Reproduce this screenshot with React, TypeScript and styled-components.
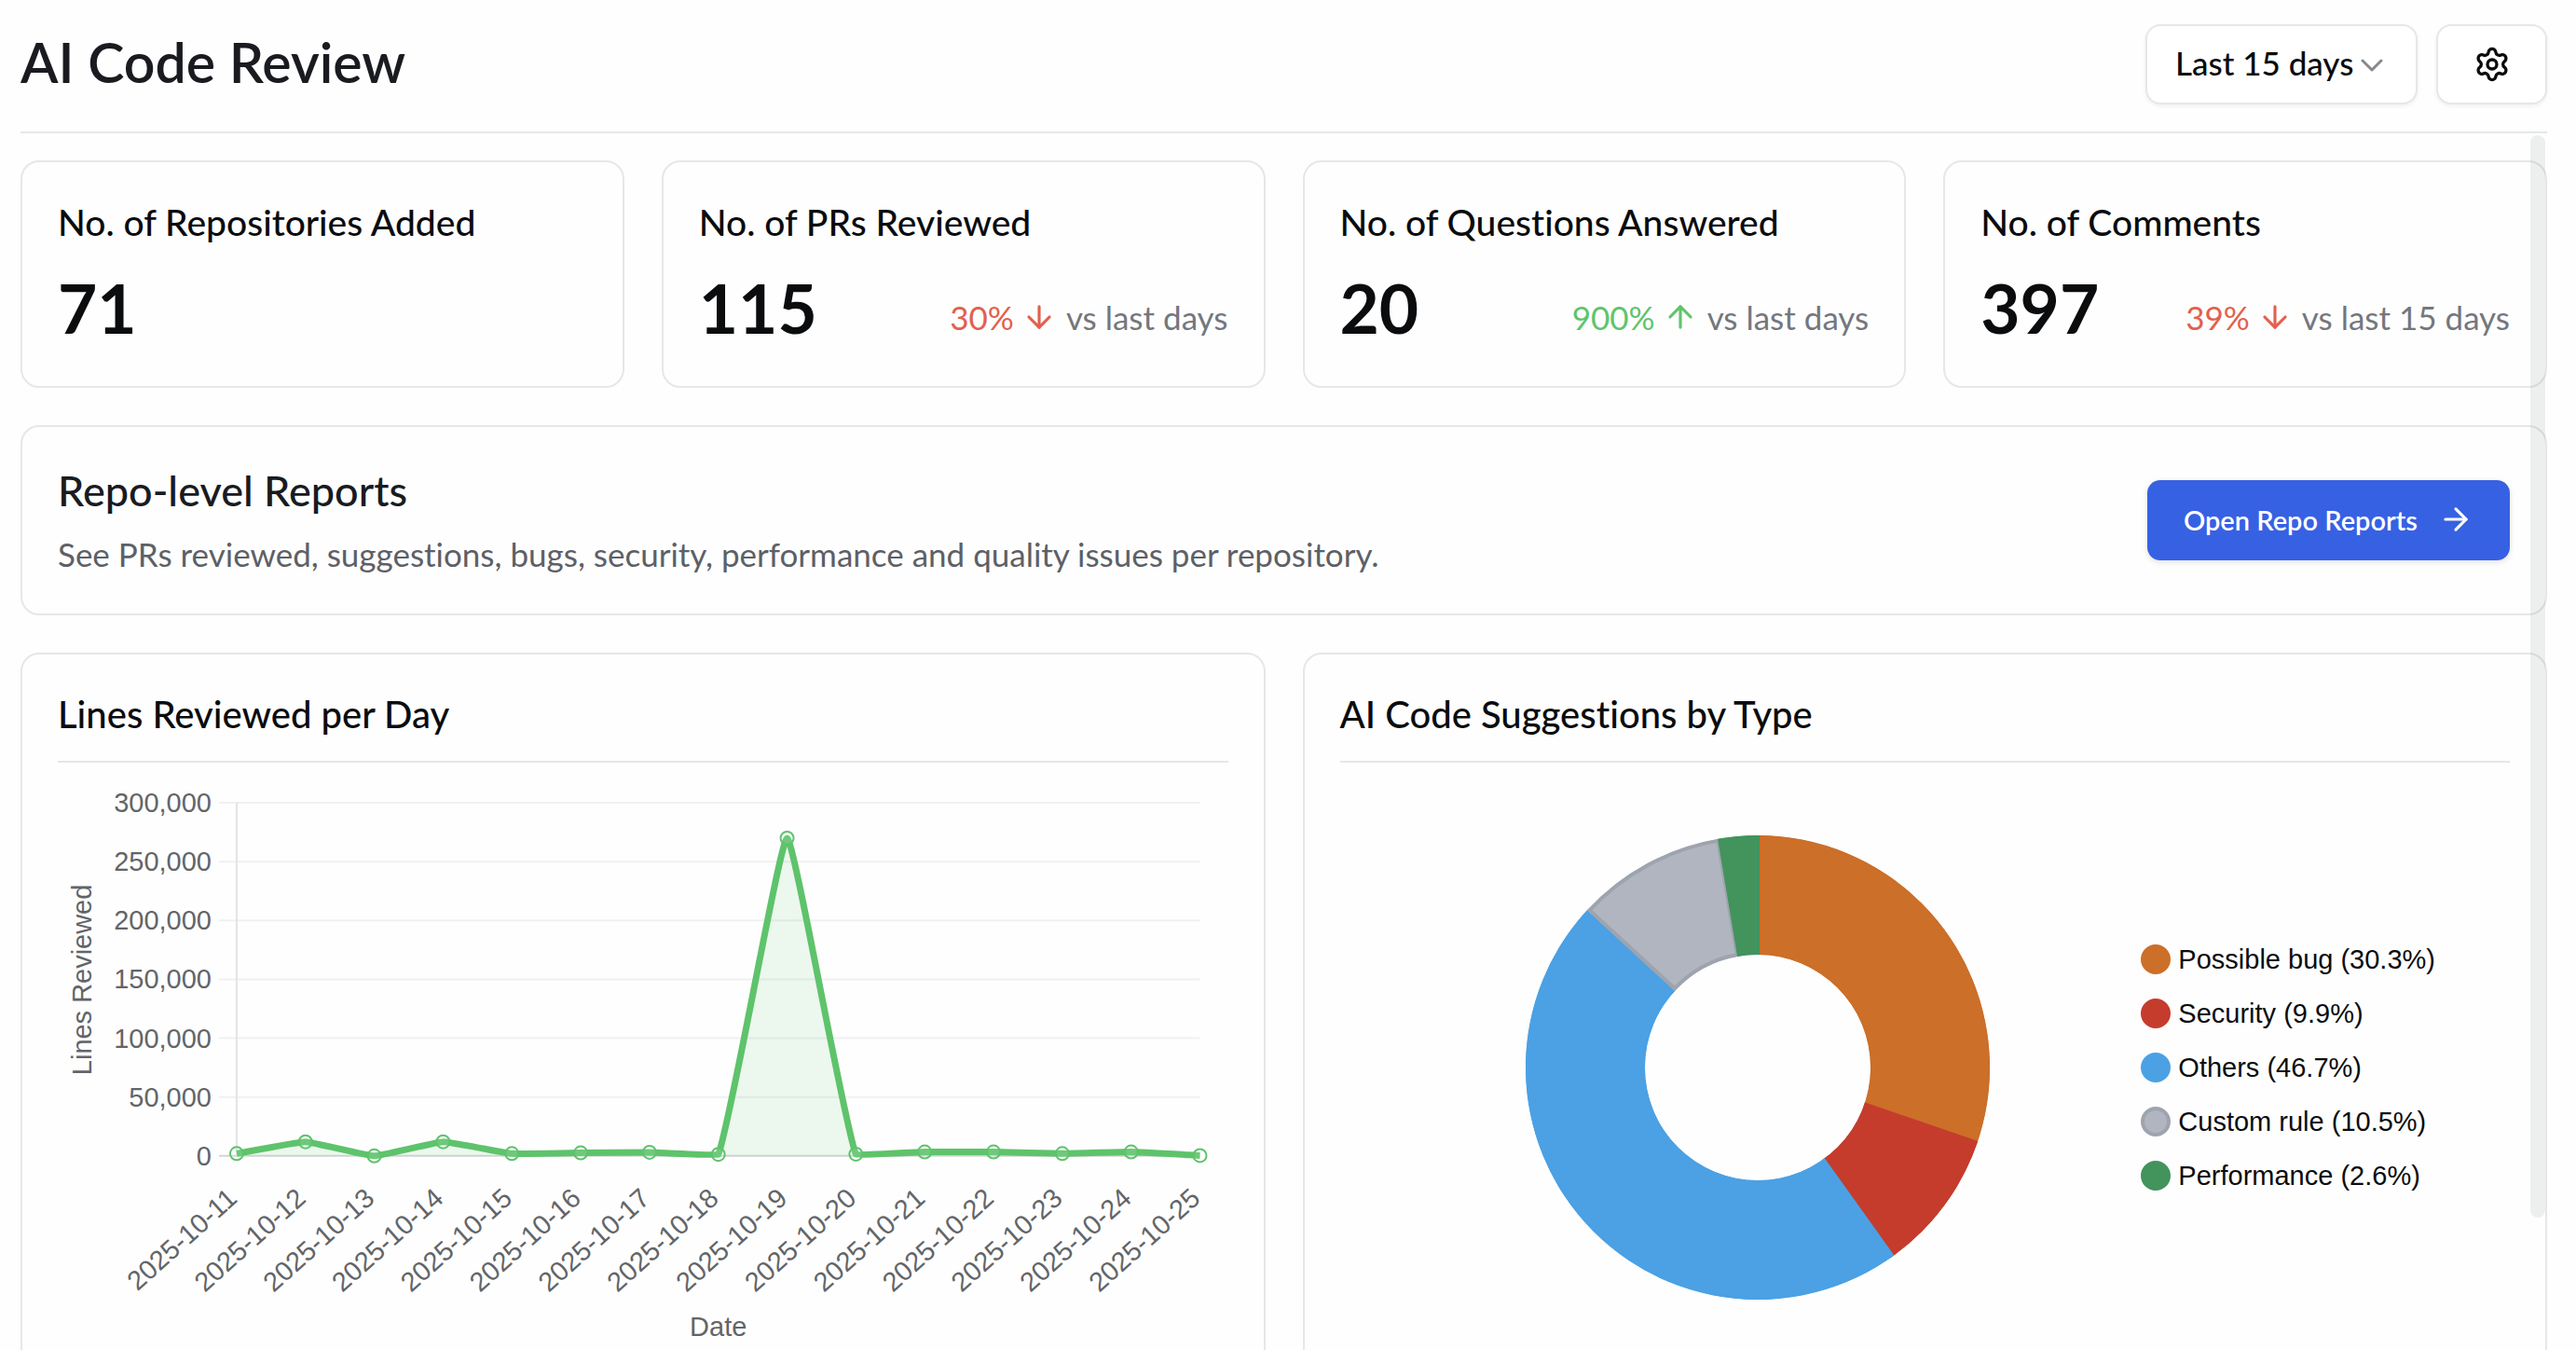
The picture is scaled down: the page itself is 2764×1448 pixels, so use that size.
import React from "react";
import styled, { createGlobalStyle } from "styled-components";
import { ArrowDown, ArrowRight, ArrowUp, Settings } from "lucide-react";

const color = {
  ink: "#0b0c0e",
  heading: "#191b20",
  body: "#5d6066",
  muted: "#74777d",
  line: "#e4e8e6",
  up: "#5fc46c",
  down: "#e2604e",
  primary: "#3761e3",
};

const GlobalStyle = createGlobalStyle`
  *, *::before, *::after { box-sizing: border-box; }
  body {
    margin: 0;
    background: #fefefe;
    color: ${color.ink};
    font-family: Lato, "Open Sans", sans-serif;
    font-variant-ligatures: none;
  }
  h1, h2, p, ul, dl, dd, figure { margin: 0; padding: 0; }
`;

const Page = styled.div`
  display: flex;
  flex-direction: column;
  height: 100vh;
  padding: 0 31px 0 22px;
`;

const Header = styled.header`
  display: flex;
  align-items: center;
  justify-content: space-between;
  padding: 26px 0 29px;
  border-bottom: 2px solid ${color.line};
`;

const PageTitle = styled.h1`
  padding-bottom: 4px;
  font-size: 59px;
  line-height: 80px;
  font-weight: 600;
  color: ${color.heading};
`;

const Controls = styled.div`
  display: flex;
  gap: 20px;
`;

const SelectWrap = styled.div`
  position: relative;
`;

const RangeSelect = styled.select`
  appearance: none;
  width: 292px;
  height: 86px;
  padding: 0 60px 4px 30px;
  border: 2px solid ${color.line};
  border-radius: 16px;
  background: #fff;
  box-shadow: 0 2px 4px rgba(0, 0, 0, 0.06);
  font: 500 35px Lato, "Open Sans", sans-serif;
  color: ${color.ink};
`;

const Chevron = styled.svg`
  position: absolute;
  top: 36px;
  right: 36px;
  width: 26px;
  height: 16px;
  pointer-events: none;
`;

const IconButton = styled.button`
  display: grid;
  place-items: center;
  width: 119px;
  height: 86px;
  padding: 0;
  border: 2px solid ${color.line};
  border-radius: 16px;
  background: #fff;
  box-shadow: 0 2px 4px rgba(0, 0, 0, 0.06);
  color: ${color.ink};
`;

const ScrollFrame = styled.div`
  position: relative;
  flex: 1;
  min-height: 0;
`;

const ScrollArea = styled.main`
  display: flex;
  flex-direction: column;
  gap: 40px;
  height: 100%;
  padding: 29px 0;
  overflow-y: auto;
  scrollbar-width: none;
`;

const ScrollThumb = styled.div`
  position: absolute;
  top: 2px;
  right: 2px;
  width: 16px;
  height: 89%;
  border-radius: 8px;
  background: rgba(20, 45, 35, 0.07);
  pointer-events: none;
`;

const Grid = styled.div<{ $columns: number }>`
  display: grid;
  grid-template-columns: repeat(${(p) => p.$columns}, minmax(0, 1fr));
  gap: 40px;
`;

const Card = styled.section`
  padding: 36px 38px 40px;
  border: 2px solid ${color.line};
  border-radius: 20px;
`;

const CardTitle = styled.h2`
  font-size: 39px;
  line-height: 56px;
  font-weight: 500;
`;

const StatRow = styled.div`
  display: flex;
  align-items: flex-end;
  justify-content: space-between;
  margin-top: 20px;
`;

const StatValue = styled.p`
  font-size: 73px;
  line-height: 88px;
  font-weight: 700;
`;

const Trend = styled.p`
  display: flex;
  align-items: center;
  padding-bottom: 6px;
  font-size: 35px;
  line-height: 56px;
  color: ${color.muted};
  white-space: nowrap;
`;

const Change = styled.span<{ $up: boolean }>`
  display: flex;
  align-items: center;
  gap: 8px;
  margin-right: 10px;
  color: ${(p) => (p.$up ? color.up : color.down)};
`;

const ReportCard = styled(Card)`
  display: flex;
  align-items: center;
  justify-content: space-between;
  padding: 38px;
`;

const ReportTitle = styled.h2`
  font-size: 45px;
  line-height: 60px;
  font-weight: 500;
  color: ${color.heading};
`;

const ReportText = styled.p`
  margin-top: 12px;
  font-size: 35px;
  line-height: 52px;
  color: ${color.body};
`;

const PrimaryButton = styled.button`
  display: flex;
  align-items: center;
  gap: 22px;
  height: 86px;
  padding: 0 39px 2px;
  border: 0;
  border-radius: 14px;
  background: ${color.primary};
  box-shadow: 0 2px 6px rgba(0, 0, 0, 0.12);
  font: 600 29px Lato, "Open Sans", sans-serif;
  color: #fff;
`;

const ChartTitle = styled(CardTitle)`
  padding-bottom: 22px;
  border-bottom: 2px solid ${color.line};
  font-size: 40px;
`;

const LineSvg = styled.svg`
  display: block;
  width: 100%;
  margin-top: 20px;
  font-family: "Liberation Sans", Arial, sans-serif;
  font-size: 29px;
  fill: #626568;
`;

const DonutFigure = styled.figure`
  display: flex;
  align-items: center;
  justify-content: flex-end;
  gap: 162px;
  margin-top: 78px;
  padding-right: 80px;
`;

const DonutSvg = styled.svg`
  flex: 0 1 498px;
  min-width: 0;
`;

const Legend = styled.ul`
  display: flex;
  flex-direction: column;
  gap: 26px;
  list-style: none;
`;

const LegendItem = styled.li`
  display: flex;
  align-items: center;
  gap: 8px;
  font-family: "Liberation Sans", Arial, sans-serif;
  font-size: 29px;
  line-height: 32px;
  white-space: nowrap;
`;

const Swatch = styled.span<{ $fill: string; $edge: string }>`
  width: 32px;
  height: 32px;
  border: 4px solid ${(p) => p.$edge};
  border-radius: 50%;
  background: ${(p) => p.$fill};
`;

type Stat = { title: string; value: number; change?: number; up?: boolean; period?: string };

const stats: Stat[] = [
  { title: "No. of Repositories Added", value: 71 },
  { title: "No. of PRs Reviewed", value: 115, change: 30, up: false, period: "vs last days" },
  { title: "No. of Questions Answered", value: 20, change: 900, up: true, period: "vs last days" },
  { title: "No. of Comments", value: 397, change: 39, up: false, period: "vs last 15 days" },
];

const days = [2000, 12000, 0, 12000, 2000, 2600, 3100, 1300, 270000, 1500, 3400, 3400, 2000, 3400, 300].map(
  (lines, i) => ({ date: `2025-10-${11 + i}`, lines })
);

const plot = { left: 192, right: 1226, top: 23, bottom: 402, max: 300000 };

/* Smooths the series with control points at a tenth of the neighbour distance. */
function linePath(points: { x: number; y: number }[]) {
  const tension = 0.1;
  const ctrl = points.map((p, i) => {
    const prev = points[i - 1] ?? p;
    const next = points[i + 1] ?? p;
    const a = Math.hypot(p.x - prev.x, p.y - prev.y);
    const b = Math.hypot(next.x - p.x, next.y - p.y);
    const fa = (tension * a) / (a + b);
    const fb = (tension * b) / (a + b);
    const dx = next.x - prev.x;
    const dy = next.y - prev.y;
    const clampY = (y: number) => Math.min(y, plot.bottom);
    return {
      inX: p.x - fa * dx,
      inY: clampY(p.y - fa * dy),
      outX: p.x + fb * dx,
      outY: clampY(p.y + fb * dy),
    };
  });
  return points
    .map((p, i) =>
      i === 0
        ? `M${p.x} ${p.y}`
        : `C${ctrl[i - 1].outX} ${ctrl[i - 1].outY} ${ctrl[i].inX} ${ctrl[i].inY} ${p.x} ${p.y}`
    )
    .join(" ");
}

function LinesChart() {
  const step = (plot.right - plot.left) / (days.length - 1);
  const points = days.map((d, i) => ({
    x: plot.left + i * step,
    y: plot.bottom - (d.lines / plot.max) * (plot.bottom - plot.top),
  }));
  const path = linePath(points);
  const ticks = [300000, 250000, 200000, 150000, 100000, 50000, 0];
  return (
    <LineSvg viewBox="0 0 1256 610" role="img" aria-label="Lines reviewed per day">
      {ticks.map((t) => {
        const y = plot.bottom - (t / plot.max) * (plot.bottom - plot.top);
        return (
          <g key={t}>
            <line x1={plot.left - 19} x2={plot.right} y1={y} y2={y} stroke={t ? "#eff1f1" : "#d3d5d5"} strokeWidth={2} />
            <text x={165} y={y + 10} textAnchor="end">
              {t.toLocaleString("en-US")}
            </text>
          </g>
        );
      })}
      <line x1={plot.left} x2={plot.left} y1={plot.top} y2={plot.bottom} stroke="#e1e4e3" strokeWidth={2} />
      <path d={`${path} L${plot.right} ${plot.bottom} L${plot.left} ${plot.bottom} Z`} fill="rgba(94,194,110,0.11)" />
      <path d={path} fill="none" stroke="#5ec36b" strokeWidth={7} strokeLinejoin="round" />
      {points.map((p, i) => (
        <g key={days[i].date}>
          <circle cx={p.x} cy={p.y} r={7} fill="rgba(255,255,255,0.1)" stroke="#5ec36b" strokeWidth={2} />
          <text textAnchor="end" transform={`translate(${p.x + 2} 450) rotate(-42)`}>
            {days[i].date}
          </text>
        </g>
      ))}
      <text x={(plot.left + plot.right) / 2} y={595} textAnchor="middle">
        Date
      </text>
      <text textAnchor="middle" transform="translate(36 213) rotate(-90)">
        Lines Reviewed
      </text>
    </LineSvg>
  );
}

const suggestions = [
  { name: "Possible bug", count: 46, fill: "#cc6f29", edge: "#cc6f29" },
  { name: "Security", count: 15, fill: "#c53c2d", edge: "#c53c2d" },
  { name: "Others", count: 71, fill: "#4ba1e4", edge: "#4ba1e4" },
  { name: "Custom rule", count: 16, fill: "#b0b5c0", edge: "#9ea4ae" },
  { name: "Performance", count: 4, fill: "#43935d", edge: "#43935d" },
];
const total = suggestions.reduce((sum, s) => sum + s.count, 0);

function slicePath(from: number, to: number, outer: number, inner: number) {
  const at = (t: number, r: number) =>
    `${249 + r * Math.sin(t * 2 * Math.PI)} ${249 - r * Math.cos(t * 2 * Math.PI)}`;
  const large = to - from > 0.5 ? 1 : 0;
  return `M${at(from, outer)} A${outer} ${outer} 0 ${large} 1 ${at(to, outer)} L${at(to, inner)} A${inner} ${inner} 0 ${large} 0 ${at(from, inner)} Z`;
}

const ringPath =
  "M249 0 A249 249 0 1 1 249 498 A249 249 0 1 1 249 0 Z M249 128 A121 121 0 1 0 249 370 A121 121 0 1 0 249 128 Z";

function SuggestionsChart() {
  let start = 0;
  const slices = suggestions.map((s) => {
    const from = start;
    start += s.count / total;
    return { ...s, outlined: s.edge !== s.fill, d: slicePath(from, start, 249, 121) };
  });
  return (
    <DonutFigure>
      <DonutSvg viewBox="0 0 498 498" role="img" aria-label="AI code suggestions by type">
        {slices.map((s, i) => (
          <g key={s.name}>
            <clipPath id={`slice-${i}`}>
              <path d={s.outlined ? s.d : ringPath} clipRule="evenodd" />
            </clipPath>
            <path
              d={s.d}
              fill={s.fill}
              stroke={s.edge}
              strokeWidth={s.outlined ? 8 : 4}
              clipPath={`url(#slice-${i})`}
            />
          </g>
        ))}
      </DonutSvg>
      <Legend>
        {suggestions.map((s) => (
          <LegendItem key={s.name}>
            <Swatch $fill={s.fill} $edge={s.edge} />
            {`${s.name} (${((s.count / total) * 100).toFixed(1)}%)`}
          </LegendItem>
        ))}
      </Legend>
    </DonutFigure>
  );
}

export default function App() {
  return (
    <>
      <GlobalStyle />
      <Page>
        <Header>
          <PageTitle>AI Code Review</PageTitle>
          <Controls>
            <SelectWrap>
              <RangeSelect aria-label="Date range" defaultValue="15">
                <option value="7">Last 7 days</option>
                <option value="15">Last 15 days</option>
                <option value="30">Last 30 days</option>
              </RangeSelect>
              <Chevron viewBox="0 0 26 16" aria-hidden="true">
                <path d="M3 3l10 10L23 3" fill="none" stroke="#85898e" strokeWidth={3} strokeLinecap="round" strokeLinejoin="round" />
              </Chevron>
            </SelectWrap>
            <IconButton type="button" aria-label="Settings">
              <Settings size={40} strokeWidth={2} />
            </IconButton>
          </Controls>
        </Header>
        <ScrollFrame>
          <ScrollArea>
            <Grid $columns={4}>
              {stats.map((s) => (
                <Card key={s.title}>
                  <CardTitle>{s.title}</CardTitle>
                  <StatRow>
                    <StatValue>{s.value}</StatValue>
                    {s.change !== undefined && (
                      <Trend>
                        <Change $up={!!s.up}>
                          {`${s.change}%`}
                          {s.up ? <ArrowUp size={38} /> : <ArrowDown size={38} />}
                        </Change>
                        {s.period}
                      </Trend>
                    )}
                  </StatRow>
                </Card>
              ))}
            </Grid>
            <ReportCard>
              <div>
                <ReportTitle>Repo-level Reports</ReportTitle>
                <ReportText>
                  See PRs reviewed, suggestions, bugs, security, performance and quality issues per repository.
                </ReportText>
              </div>
              <PrimaryButton type="button">
                Open Repo Reports
                <ArrowRight size={38} />
              </PrimaryButton>
            </ReportCard>
            <Grid $columns={2}>
              <Card>
                <ChartTitle>Lines Reviewed per Day</ChartTitle>
                <LinesChart />
              </Card>
              <Card>
                <ChartTitle>AI Code Suggestions by Type</ChartTitle>
                <SuggestionsChart />
              </Card>
            </Grid>
          </ScrollArea>
          <ScrollThumb />
        </ScrollFrame>
      </Page>
    </>
  );
}
